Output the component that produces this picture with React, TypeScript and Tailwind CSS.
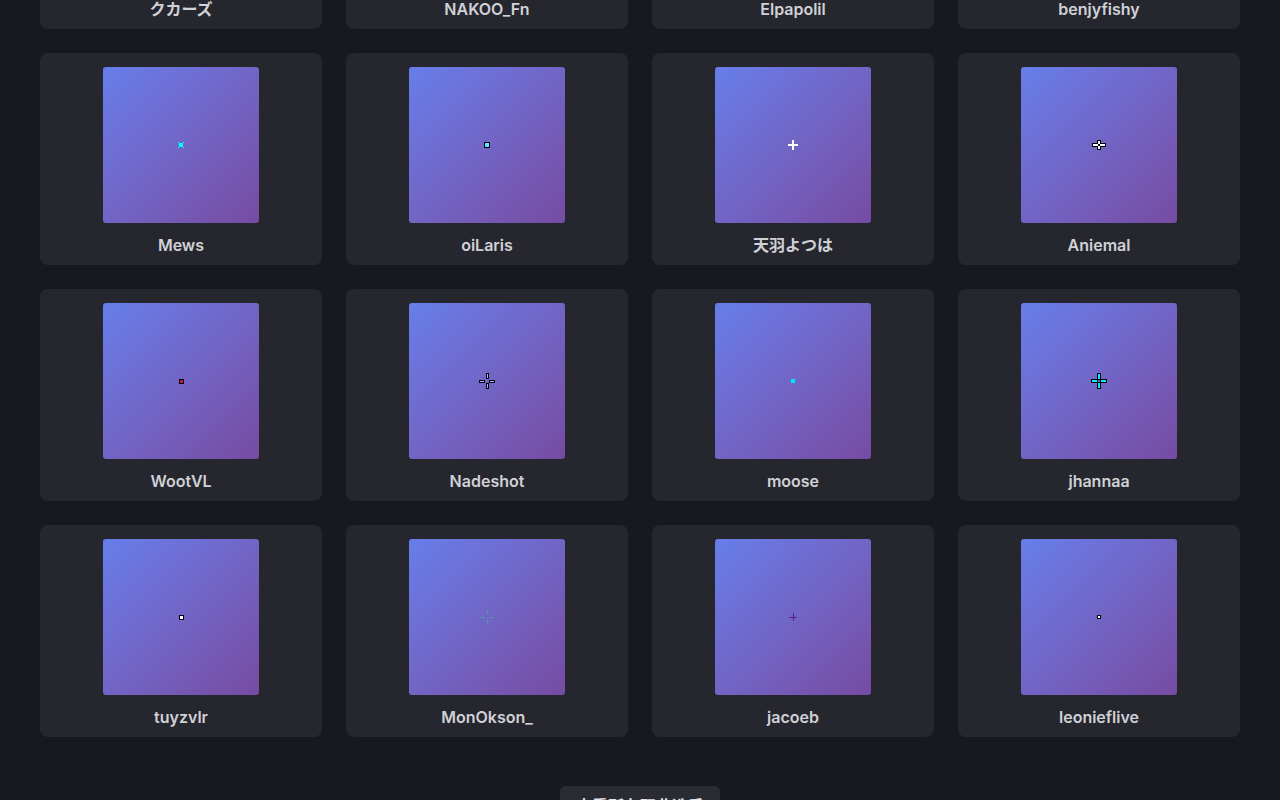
import React from 'react';

type Player = {
  name: string;
  crosshair: React.ReactNode;
};

// Small crosshair previews, drawn in a 40x40 box centred on the thumbnail
function Dot({ size, fill, outline = true }: { size: number; fill: string; outline?: boolean }) {
  const o = (40 - size) / 2;
  return (
    <svg width="40" height="40" viewBox="0 0 40 40" shapeRendering="crispEdges">
      {outline && <rect x={o - 1} y={o - 1} width={size + 2} height={size + 2} fill="#000" />}
      <rect x={o} y={o} width={size} height={size} fill={fill} />
    </svg>
  );
}

function Cross({
  len,
  gap,
  thick,
  color,
  outline,
  opacity = 1,
  wide = 0,
}: {
  len: number;
  gap: number;
  thick: number;
  color: string;
  outline: boolean;
  opacity?: number;
  wide?: number;
}) {
  const c = 20;
  const h = thick / 2;
  const arms = [
    // left, right (horizontal arms can be longer)
    { x: c - gap - len - wide, y: c - h, w: len + wide, hh: thick },
    { x: c + gap, y: c - h, w: len + wide, hh: thick },
    // top, bottom
    { x: c - h, y: c - gap - len, w: thick, hh: len },
    { x: c - h, y: c + gap, w: thick, hh: len },
  ];
  return (
    <svg width="40" height="40" viewBox="0 0 40 40" shapeRendering="crispEdges" opacity={opacity}>
      {outline &&
        arms.map((a, i) => (
          <rect key={'o' + i} x={a.x - 1} y={a.y - 1} width={a.w + 2} height={a.hh + 2} fill="#000" />
        ))}
      {arms.map((a, i) => (
        <rect key={i} x={a.x} y={a.y} width={a.w} height={a.hh} fill={color} />
      ))}
    </svg>
  );
}

const players: Player[] = [
  { name: 'クカーズ', crosshair: <Dot size={4} fill="#00ffff" outline={false} /> },
  { name: 'NAKOO_Fn', crosshair: <Dot size={4} fill="#ffffff" /> },
  { name: 'Elpapolil', crosshair: <Cross len={5} gap={0} thick={2} color="#ffffff" outline={false} /> },
  { name: 'benjyfishy', crosshair: <Dot size={3} fill="#ffffff" /> },
  {
    name: 'Mews',
    crosshair: (
      <svg width="40" height="40" viewBox="0 0 40 40" shapeRendering="crispEdges">
        <rect x="18" y="18" width="4" height="4" fill="#00ffff" />
        <rect x="17" y="17" width="1" height="1" fill="#00ffff" />
        <rect x="22" y="17" width="1" height="1" fill="#00ffff" />
        <rect x="17" y="22" width="1" height="1" fill="#00ffff" />
        <rect x="22" y="22" width="1" height="1" fill="#00ffff" />
      </svg>
    ),
  },
  { name: 'oiLaris', crosshair: <Dot size={4} fill="#5fe3ff" /> },
  { name: '天羽よつは', crosshair: <Cross len={5} gap={0} thick={2} color="#ffffff" outline={false} /> },
  { name: 'Aniemal', crosshair: <Cross len={3} gap={1} thick={2} color="#ffffff" outline wide={2} /> },
  { name: 'WootVL', crosshair: <Dot size={3} fill="#c0134a" /> },
  { name: 'Nadeshot', crosshair: <Cross len={4} gap={3} thick={1} color="#9fb8ff" outline /> },
  { name: 'moose', crosshair: <Dot size={4} fill="#00e5ff" outline={false} /> },
  { name: 'jhannaa', crosshair: <Cross len={5} gap={2} thick={2} color="#00f0ff" outline /> },
  { name: 'tuyzvlr', crosshair: <Dot size={3} fill="#ffffff" /> },
  { name: 'MonOkson_', crosshair: <Cross len={5} gap={2} thick={1} color="#35d07a" outline={false} opacity={0.45} /> },
  { name: 'jacoeb', crosshair: <Cross len={4} gap={0} thick={1} color="#5a1f80" outline={false} /> },
  { name: 'leonieflive', crosshair: <Dot size={2} fill="#ffffff" /> },
];

export default function App() {
  return (
    <div
      className="min-h-screen bg-[#18191e] overflow-hidden"
      style={{ fontFamily: 'Inter, "Noto Sans CJK JP", "Noto Sans", sans-serif' }}>
      <div className="mx-auto w-[1200px] -mt-[183px] pb-10">
        <div className="grid grid-cols-4 gap-6">
          {players.map((p) => (
            <div
              key={p.name}
              className="bg-[#26272e] rounded-lg pt-[14px] pb-[8px] flex flex-col items-center">
              <div className="w-[156px] h-[156px] rounded-[3px] bg-gradient-to-br from-[#667eea] to-[#764ba2] flex items-center justify-center">
                {p.crosshair}
              </div>
              <div className="mt-[10px] leading-6 text-base font-semibold text-[#d0d1d7]">{p.name}</div>
            </div>
          ))}
        </div>
        <div className="flex justify-center mt-[49px]">
          <button className="w-[160px] h-10 rounded-md bg-[#2a2b33] text-[#e4e4e8] text-base font-semibold">
            查看所有职业选手
          </button>
        </div>
      </div>
    </div>
  );
}
